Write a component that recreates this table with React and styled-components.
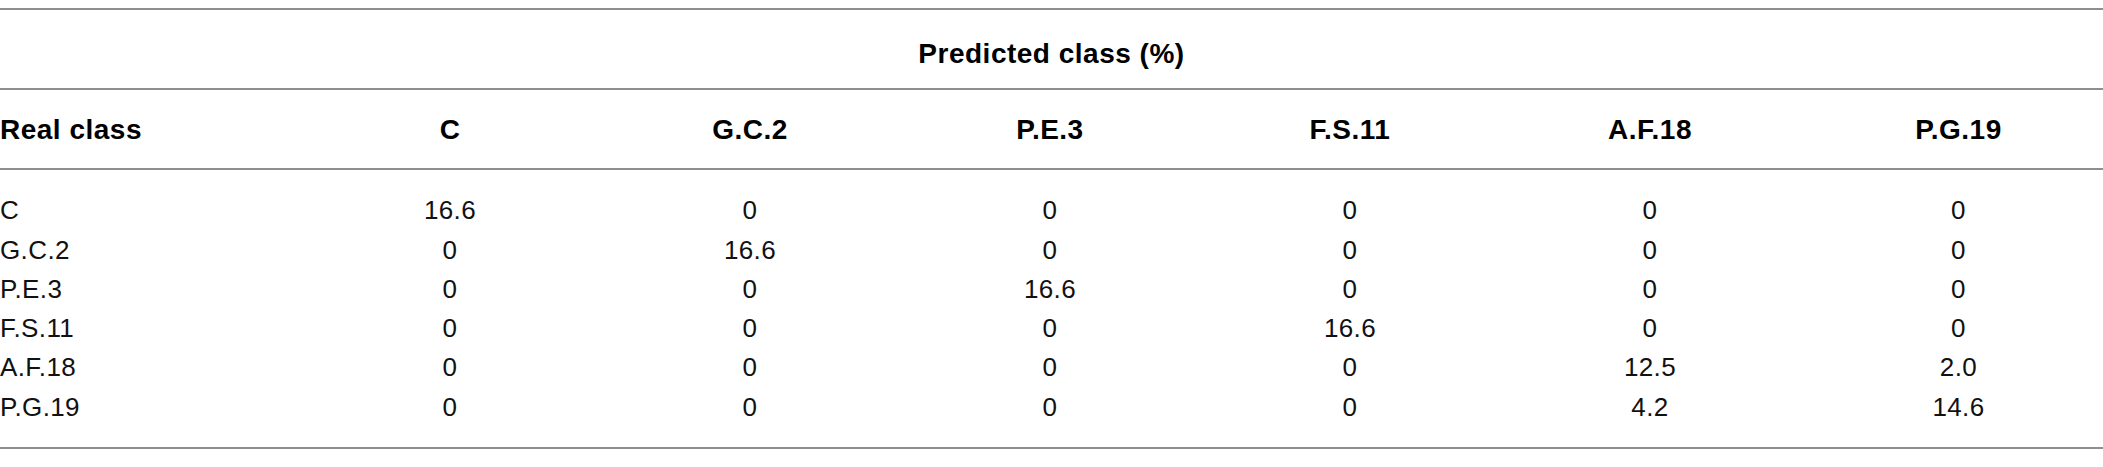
import React from "react";
import styled, { createGlobalStyle } from "styled-components";

const Global = createGlobalStyle`
  html, body { margin: 0; padding: 0; background: #ffffff; }
  body { font-family: "Liberation Sans", Arial, sans-serif; }
`;

const Page = styled.div`
  padding-top: 8px;
`;

const Table = styled.div`
  width: 100%;
  border-top: 2px solid #8e8e8e;
  border-bottom: 2px solid #8e8e8e;
`;

const TitleRow = styled.div`
  border-bottom: 2px solid #8e8e8e;
  padding: 28px 0 19px;
  text-align: center;
  font-size: 28px;
  line-height: 31px;
  font-weight: 700;
  letter-spacing: 0.5px;
  color: #000;
`;

const Grid = styled.div`
  display: grid;
  grid-template-columns: 300px repeat(5, 300px) 1fr;
`;

const HeaderRow = styled(Grid)`
  border-bottom: 2px solid #8e8e8e;
  padding: 24px 0 23px;
  font-size: 28px;
  line-height: 31px;
  font-weight: 700;
  letter-spacing: 0.5px;
  color: #000;
`;

const Body = styled.div`
  padding: 21.3px 0 19.9px;
`;

const DataRow = styled(Grid)`
  font-size: 26px;
  line-height: 39.3px;
  font-weight: 400;
  letter-spacing: 0.4px;
  color: #111;
`;

const Cell = styled.div`
  white-space: nowrap;
  text-align: ${(p) => (p.$first ? "left" : "center")};
  padding-left: ${(p) => (p.$last ? "14px" : "0")};
`;

const columns = ["C", "G.C.2", "P.E.3", "F.S.11", "A.F.18", "P.G.19"];

const rows = [
  ["C", "16.6", "0", "0", "0", "0", "0"],
  ["G.C.2", "0", "16.6", "0", "0", "0", "0"],
  ["P.E.3", "0", "0", "16.6", "0", "0", "0"],
  ["F.S.11", "0", "0", "0", "16.6", "0", "0"],
  ["A.F.18", "0", "0", "0", "0", "12.5", "2.0"],
  ["P.G.19", "0", "0", "0", "0", "4.2", "14.6"],
];

export default function App() {
  return (
    <Page>
      <Global />
      <Table>
        <TitleRow>Predicted class (%)</TitleRow>
        <HeaderRow>
          <Cell $first>Real class</Cell>
          {columns.map((c, i) => (
            <Cell key={c} $last={i === columns.length - 1}>
              {c}
            </Cell>
          ))}
        </HeaderRow>
        <Body>
          {rows.map((r) => (
            <DataRow key={r[0]}>
              {r.map((v, i) => (
                <Cell key={i} $first={i === 0} $last={i === r.length - 1}>
                  {v}
                </Cell>
              ))}
            </DataRow>
          ))}
        </Body>
      </Table>
    </Page>
  );
}
